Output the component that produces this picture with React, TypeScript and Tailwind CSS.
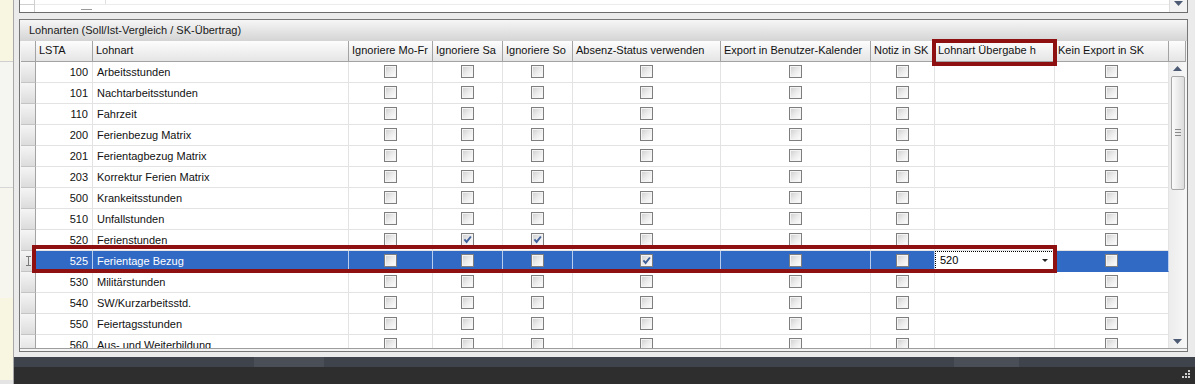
import React from 'react';

type Row = {
  code: string;
  name: string;
  checks: boolean[]; // Mo-Fr, Sa, So, Absenz, Export, Notiz, Kein Export
  selected?: boolean;
  transfer?: string;
};

const COLS = 'grid-cols-[15px_57px_256px_84px_70px_70px_148px_150px_64px_120px_114px]';

const headers = [
  'LSTA',
  'Lohnart',
  'Ignoriere Mo-Fr',
  'Ignoriere Sa',
  'Ignoriere So',
  'Absenz-Status verwenden',
  'Export in Benutzer-Kalender',
  'Notiz in SK',
  'Lohnart Übergabe h',
  'Kein Export in SK',
];

const none = [false, false, false, false, false, false, false];

const rows: Row[] = [
  { code: '100', name: 'Arbeitsstunden', checks: none },
  { code: '101', name: 'Nachtarbeitsstunden', checks: none },
  { code: '110', name: 'Fahrzeit', checks: none },
  { code: '200', name: 'Ferienbezug Matrix', checks: none },
  { code: '201', name: 'Ferientagbezug Matrix', checks: none },
  { code: '203', name: 'Korrektur Ferien Matrix', checks: none },
  { code: '500', name: 'Krankeitsstunden', checks: none },
  { code: '510', name: 'Unfallstunden', checks: none },
  { code: '520', name: 'Ferienstunden', checks: [false, true, true, false, false, false, false] },
  {
    code: '525',
    name: 'Ferientage Bezug',
    checks: [false, false, false, true, false, false, false],
    selected: true,
    transfer: '520',
  },
  { code: '530', name: 'Militärstunden', checks: none },
  { code: '540', name: 'SW/Kurzarbeitsstd.', checks: none },
  { code: '550', name: 'Feiertagsstunden', checks: none },
  { code: '560', name: 'Aus- und Weiterbildung', checks: none },
];

function Checkbox({ checked }: { checked: boolean }) {
  return (
    <span className="flex h-[13px] w-[13px] items-center justify-center border border-[#7e7e7e] bg-linear-to-br from-[#cdcdcd] via-[#ebebeb] to-white shadow-[inset_0_0_0_1px_#f4f4f4]">
      {checked && (
        <svg width="11" height="11" viewBox="0 0 11 11">
          <path d="M2.4 5.4 L4.6 7.9 L8.9 2.5" fill="none" stroke="#40619a" strokeWidth="1.9" />
        </svg>
      )}
    </span>
  );
}

function Arrow({ up }: { up?: boolean }) {
  return (
    <svg width="9" height="5" viewBox="0 0 9 5">
      <path d={up ? 'M0 5 L4.5 0 L9 5 Z' : 'M0 0 L9 0 L4.5 5 Z'} fill="#4c5a74" />
    </svg>
  );
}

function HeaderRow() {
  return (
    <div className={`grid h-[21px] ${COLS}`}>
      <div className="border-r border-b border-[#a3a3a3] bg-linear-to-b from-[#fafafa] to-[#e2e2e2]" />
      {headers.map((h) => (
        <div
          key={h}
          className="flex items-center overflow-hidden whitespace-nowrap border-r border-b border-[#a3a3a3] bg-linear-to-b from-[#fdfdfd] to-[#e5e5e5] pl-[3px] text-[#111]"
        >
          {h}
        </div>
      ))}
    </div>
  );
}

function DataRow({ row }: { row: Row }) {
  const sel = row.selected;
  const cell = sel
    ? 'border-r border-b border-r-[#b9cdee] border-b-[#316ac5] bg-[#316ac5] text-white'
    : 'border-r border-b border-[#e3e3e3] bg-white text-[#111]';
  const [mofr, sa, so, absenz, exp, notiz, kein] = row.checks;
  return (
    <div className={`grid h-[21px] ${COLS}`}>
      <div className="flex items-center justify-center border-r border-b border-r-[#a3a3a3] border-b-[#c4c4c4] bg-linear-to-b from-[#f5f5f5] to-[#dcdcdc]">
        {sel && (
          <svg width="5" height="10" viewBox="0 0 5 10">
            <path d="M0 0.5 H5 M2.5 0.5 V9.5 M0 9.5 H5" stroke="#7a7a7a" strokeWidth="1" fill="none" />
          </svg>
        )}
      </div>
      <div className={`flex items-center justify-end pr-[4px] pt-px ${cell}`}>{row.code}</div>
      <div className={`flex items-center pl-[4px] pt-px ${cell}`}>{row.name}</div>
      {[mofr, sa, so, absenz, exp, notiz].map((c, i) => (
        <div key={i} className={`flex items-center justify-center ${cell}`}>
          <Checkbox checked={c} />
        </div>
      ))}
      <div className={`flex items-center ${cell}`}>
        {row.transfer && (
          <div className="flex h-[19px] w-full items-center justify-between border border-dotted border-black bg-white pl-[4px] pr-[5px] text-black">
            <span>{row.transfer}</span>
            <svg width="6" height="3" viewBox="0 0 6 3">
              <path d="M0 0 H6 L3 3 Z" fill="#222" />
            </svg>
          </div>
        )}
      </div>
      <div className={`flex items-center justify-center ${cell}`}>
        <Checkbox checked={kein} />
      </div>
    </div>
  );
}

function Scrollbar() {
  return (
    <div className="flex w-[17px] flex-col">
      <div className="h-[21px] border-r border-b border-[#a3a3a3] bg-linear-to-b from-[#fdfdfd] to-[#e5e5e5]" />
      <div className="flex h-[287px] flex-col items-center bg-linear-to-r from-[#ececec] to-[#f7f7f7]">
        <div className="flex h-[14px] items-center justify-center">
          <Arrow up />
        </div>
        <div className="flex h-[114px] w-[14px] flex-col items-center justify-center gap-[2px] rounded-[2px] border border-[#a8a8a8] bg-linear-to-r from-[#fbfbfb] to-[#dcdcdc]">
          <span className="h-px w-[6px] bg-[#8a8a8a]" />
          <span className="h-px w-[6px] bg-[#8a8a8a]" />
          <span className="h-px w-[6px] bg-[#8a8a8a]" />
        </div>
        <div className="flex-1" />
        <div className="flex h-[14px] items-center justify-center">
          <Arrow />
        </div>
      </div>
    </div>
  );
}

export default function App() {
  return (
    <div className="relative flex h-[384px] w-[1195px] overflow-hidden bg-[#ebebeb] font-['Liberation_Sans',Arial,sans-serif] text-[11px] leading-none">
      {/* left edge of the neighbouring pane */}
      <div className="flex w-[14px] shrink-0 flex-col border-r border-[#a9a9a9]">
        <div className="h-[62px] border-b border-[#cfcfcf] bg-[#f8f6e0]" />
        <div className="h-[126px] border-b border-[#d6d6d6] bg-[#f5f5f1]" />
        <div className="h-[110px] bg-[#f6f5ee]" />
        <div className="flex-1 bg-[#f8f6e0]" />
        <div className="h-[4px] bg-[#e4e4e4]" />
      </div>

      <div className="flex flex-1 flex-col">
        <div className="flex flex-1 flex-col pl-[5px] pr-[7px]">
          {/* bottom of the grid above */}
          <div className="flex h-[13px] border-x border-b border-[#6c6c6c] bg-white">
            <div className="w-[15px] border-r border-[#cfcfcf]">
              <div className="h-[5px] border-b border-[#cfcfcf]" />
            </div>
            <div className="flex-1">
              <div className="flex h-[5px] border-b border-[#ececec]">
                <div className="w-[71px] border-r border-[#e0e0e0]" />
              </div>
              <div className="ml-[46px] mt-[4px] h-px w-[11px] bg-[#9a9a9a]" />
            </div>
            <div className="flex w-[18px] justify-center border-l border-[#dcdcdc] bg-[#f2f2f2] pt-[1px]">
              <Arrow />
            </div>
          </div>

          <div className="h-[6px]" />

          {/* group panel */}
          <div className="flex h-[333px] flex-col border border-[#767676] bg-[#f4f4f4]">
            <div className="flex h-[21px] items-center bg-linear-to-b from-[#f6f6f6] to-[#d4d4d4] pl-[9px] text-[#1a1a1a]">
              Lohnarten (Soll/Ist-Vergleich / SK-Übertrag)
            </div>
            <div className="flex h-[308px] border-b border-[#9d9d9d] px-px">
              <div className="flex w-[1148px] flex-col">
                <HeaderRow />
                <div className="h-[287px] overflow-hidden bg-white">
                  {rows.map((r) => (
                    <DataRow key={r.code} row={r} />
                  ))}
                </div>
              </div>
              <Scrollbar />
            </div>
          </div>
        </div>

        {/* status strip */}
        <div className="flex h-[27px] flex-col">
          <div className="flex h-[10px]">
            <div className="w-[240px] bg-[#3f434b]" />
            <div className="w-[70px] bg-[#4a4e56]" />
            <div className="w-[630px] bg-[#3f434b]" />
            <div className="w-[65px] bg-[#4a4e56]" />
            <div className="flex-1 bg-[#3f434b]" />
          </div>
          <div className="flex flex-1 items-end justify-end bg-[#2e2e2e] pb-[5px] pr-[4px]">
            <svg width="10" height="10" viewBox="0 0 10 10">
              <rect x="7" y="1" width="2" height="2" fill="#cfcfcf" />
              <rect x="4" y="4" width="2" height="2" fill="#cfcfcf" />
              <rect x="7" y="4" width="2" height="2" fill="#cfcfcf" />
              <rect x="1" y="7" width="2" height="2" fill="#cfcfcf" />
              <rect x="4" y="7" width="2" height="2" fill="#cfcfcf" />
              <rect x="7" y="7" width="2" height="2" fill="#cfcfcf" />
            </svg>
          </div>
        </div>
      </div>

      {/* highlight marks */}
      <div className="pointer-events-none absolute left-[932px] top-[39px] h-[27px] w-[125px] border-4 border-[#8e1010]" />
      <div className="pointer-events-none absolute left-[32px] top-[245px] h-[28px] w-[1025px] border-4 border-[#8e1010]" />
    </div>
  );
}
